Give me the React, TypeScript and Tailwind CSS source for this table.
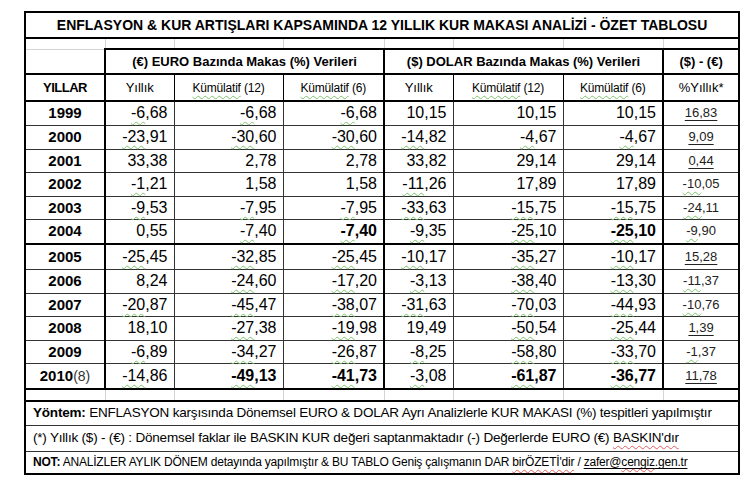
import React from "react";

type Row = {
  year: string;
  note?: string;
  vals: string[];
  bold?: number[];
  thickTop?: boolean;
  h: string;
};

const rows: Row[] = [
  { year: "1999", vals: ["-6,68", "-6,68", "-6,68", "10,15", "10,15", "10,15", "16,83"], h: "h-[24px]" },
  { year: "2000", vals: ["-23,91", "-30,60", "-30,60", "-14,82", "-4,67", "-4,67", "9,09"], h: "h-[24px]" },
  { year: "2001", vals: ["33,38", "2,78", "2,78", "33,82", "29,14", "29,14", "0,44"], h: "h-[23px]" },
  { year: "2002", vals: ["-1,21", "1,58", "1,58", "-11,26", "17,89", "17,89", "-10,05"], h: "h-[24px]" },
  { year: "2003", vals: ["-9,53", "-7,95", "-7,95", "-33,63", "-15,75", "-15,75", "-24,11"], h: "h-[23px]" },
  { year: "2004", vals: ["0,55", "-7,40", "-7,40", "-9,35", "-25,10", "-25,10", "-9,90"], bold: [2, 5], h: "h-[25px]" },
  { year: "2005", vals: ["-25,45", "-32,85", "-25,45", "-10,17", "-35,27", "-10,17", "15,28"], thickTop: true, h: "h-[25px]" },
  { year: "2006", vals: ["8,24", "-24,60", "-17,20", "-3,13", "-38,40", "-13,30", "-11,37"], h: "h-[24px]" },
  { year: "2007", vals: ["-20,87", "-45,47", "-38,07", "-31,63", "-70,03", "-44,93", "-10,76"], h: "h-[23px]" },
  { year: "2008", vals: ["18,10", "-27,38", "-19,98", "19,49", "-50,54", "-25,44", "1,39"], h: "h-[24px]" },
  { year: "2009", vals: ["-6,89", "-34,27", "-26,87", "-8,25", "-58,80", "-33,70", "-1,37"], h: "h-[23px]" },
  { year: "2010", note: "(8)", vals: ["-14,86", "-49,13", "-41,73", "-3,08", "-61,87", "-36,77", "11,78"], bold: [1, 2, 4, 5], h: "h-[26px]" },
];

// thick vertical lines after YILLAR, after euro block and after dolar block
const rightEdge = ["border-r-2", "border-r", "border-r", "border-r-2", "border-r", "border-r", "border-r-2", "border-r-2"];

function Squiggle({ children }: { children: React.ReactNode }) {
  return (
    <span className="underline decoration-wavy decoration-[#7cc36b] decoration-1 underline-offset-[3px]">
      {children}
    </span>
  );
}

function Value({ v, last }: { v: string; last?: boolean }) {
  const [whole, dec] = v.split(",");
  if (v.startsWith("-")) {
    return (
      <>
        <Squiggle>{whole}</Squiggle>,{dec}
      </>
    );
  }
  if (last) {
    return <span className="underline decoration-1 underline-offset-[3px]">{v}</span>;
  }
  return <>{v}</>;
}

function GapRow({ h }: { h: string }) {
  return (
    <tr className={h}>
      {rightEdge.map((_, i) => (
        <td
          key={i}
          className={`p-0 border-x ${i === 0 ? "border-l-2 border-l-black" : "border-l-[#d4d4d4]"} ${
            i === 7 ? "border-r-2 border-r-black" : "border-r-[#d4d4d4]"
          }`}
        />
      ))}
    </tr>
  );
}

export default function App() {
  return (
    <div className="w-[750px] h-[484px] bg-white pt-[11px] pl-[24px] text-black font-['Liberation_Sans',Arial,sans-serif]">
      <table className="table-fixed border-collapse w-[714px] leading-[18px]">
        <colgroup>
          <col className="w-[80px]" />
          <col className="w-[69px]" />
          <col className="w-[109px]" />
          <col className="w-[101px]" />
          <col className="w-[69px]" />
          <col className="w-[110px]" />
          <col className="w-[100px]" />
          <col className="w-[76px]" />
        </colgroup>
        <tbody>
          <tr className="h-[26px]">
            <td colSpan={8} className="border-2 border-black p-0 text-center text-[14px] font-bold">
              ENFLASYON &amp; KUR ARTIŞLARI KAPSAMINDA 12 YILLIK KUR MAKASI ANALİZİ - ÖZET TABLOSU
            </td>
          </tr>
          <GapRow h="h-[11px]" />
          <tr className="h-[25px] text-[13px] font-bold">
            <td className="p-0 border-l-2 border-l-black border-t border-t-[#d4d4d4] border-r-2 border-r-black" />
            <td colSpan={3} className="p-0 text-center border-2 border-black">
              (€) EURO Bazında Makas (%) Verileri
            </td>
            <td colSpan={3} className="p-0 text-center border-2 border-black">
              ($) DOLAR Bazında Makas (%) Verileri
            </td>
            <td className="p-0 text-center border-2 border-black">($) - (€)</td>
          </tr>
          <tr className="h-[27px] text-[13px]">
            <td className="p-0 text-center font-bold text-[13px] tracking-[-0.5px] border-2 border-black">YILLAR</td>
            <td className="p-0 text-center border-y-2 border-black border-r">Yıllık</td>
            <td className="p-0 text-center text-[12px] tracking-[-0.2px] border-y-2 border-black border-r">
              <Squiggle>Kümülatif</Squiggle> (12)
            </td>
            <td className="p-0 text-center text-[12px] tracking-[-0.2px] border-y-2 border-black border-r-2">
              <Squiggle>Kümülatif</Squiggle> (6)
            </td>
            <td className="p-0 text-center border-y-2 border-black border-r">Yıllık</td>
            <td className="p-0 text-center text-[12px] tracking-[-0.2px] border-y-2 border-black border-r">
              <Squiggle>Kümülatif</Squiggle> (12)
            </td>
            <td className="p-0 text-center text-[12px] tracking-[-0.2px] border-y-2 border-black border-r-2">
              <Squiggle>Kümülatif</Squiggle> (6)
            </td>
            <td className="p-0 text-center border-2 border-black">%Yıllık*</td>
          </tr>
          {rows.map((r, ri) => (
            <tr key={r.year} className={r.h}>
              <td
                className={`p-0 text-center text-[15px] font-bold border border-[#333] border-l-2 border-l-black border-r-2 border-r-black ${
                  r.thickTop ? "border-t-2 border-t-black" : ""
                } ${ri === rows.length - 1 ? "border-b-2 border-b-black" : ""}`}
              >
                {r.year}
                {r.note && <span className="font-normal text-[14px] text-[#333]">{r.note}</span>}
              </td>
              {r.vals.map((v, i) => {
                const last = i === 6;
                const isBold = r.bold?.includes(i);
                return (
                  <td
                    key={i}
                    className={`p-0 border border-[#333] ${rightEdge[i + 1]} ${
                      rightEdge[i + 1] === "border-r-2" ? "border-r-black" : ""
                    } ${r.thickTop ? "border-t-2 border-t-black" : ""} ${
                      ri === rows.length - 1 ? "border-b-2 border-b-black" : ""
                    } ${last ? "text-center text-[13px] text-[#222]" : "text-right pr-[6px] text-[16px]"} ${
                      isBold ? "font-bold" : ""
                    }`}
                  >
                    <Value v={v} last={last} />
                  </td>
                );
              })}
            </tr>
          ))}
          <GapRow h="h-[12px]" />
          <tr className="h-[24px]">
            <td colSpan={8} className="border-2 border-b border-black border-b-[#333] p-0 pl-[7px] text-[13.5px] tracking-[-0.2px] whitespace-nowrap">
              <b>Yöntem:</b> ENFLASYON karşısında Dönemsel EURO &amp; DOLAR Ayrı Analizlerle KUR MAKASI (%) tespitleri
              yapılmıştır
            </td>
          </tr>
          <tr className="h-[26px]">
            <td colSpan={8} className="border-x-2 border-y border-black border-y-[#333] p-0 pl-[7px] text-[13.5px] tracking-[-0.2px] whitespace-nowrap">
              (*) Yıllık ($) - (€) : Dönemsel faklar ile BASKIN KUR değeri saptanmaktadır (-) Değerlerde EURO (€){" "}
              <span className="underline decoration-wavy decoration-[#e06060] decoration-1 underline-offset-[3px]">
                BASKIN'dır
              </span>
            </td>
          </tr>
          <tr className="h-[23px]">
            <td colSpan={8} className="border-2 border-t border-black border-t-[#333] p-0 pl-[7px] text-[12px] tracking-[-0.2px] whitespace-nowrap">
              <b>NOT:</b> ANALİZLER AYLIK DÖNEM detayında yapılmıştır &amp; BU TABLO Geniş çalışmanın DAR{" "}
              <span className="underline decoration-wavy decoration-[#e06060] decoration-1 underline-offset-[3px]">
                birÖZETİ'dir
              </span>{" "}
              /{" "}
              <span className="underline underline-offset-2">
                zafer@
                <span className="underline decoration-wavy decoration-[#e06060] decoration-1">cengiz</span>.gen.tr
              </span>
            </td>
          </tr>
        </tbody>
      </table>
    </div>
  );
}
